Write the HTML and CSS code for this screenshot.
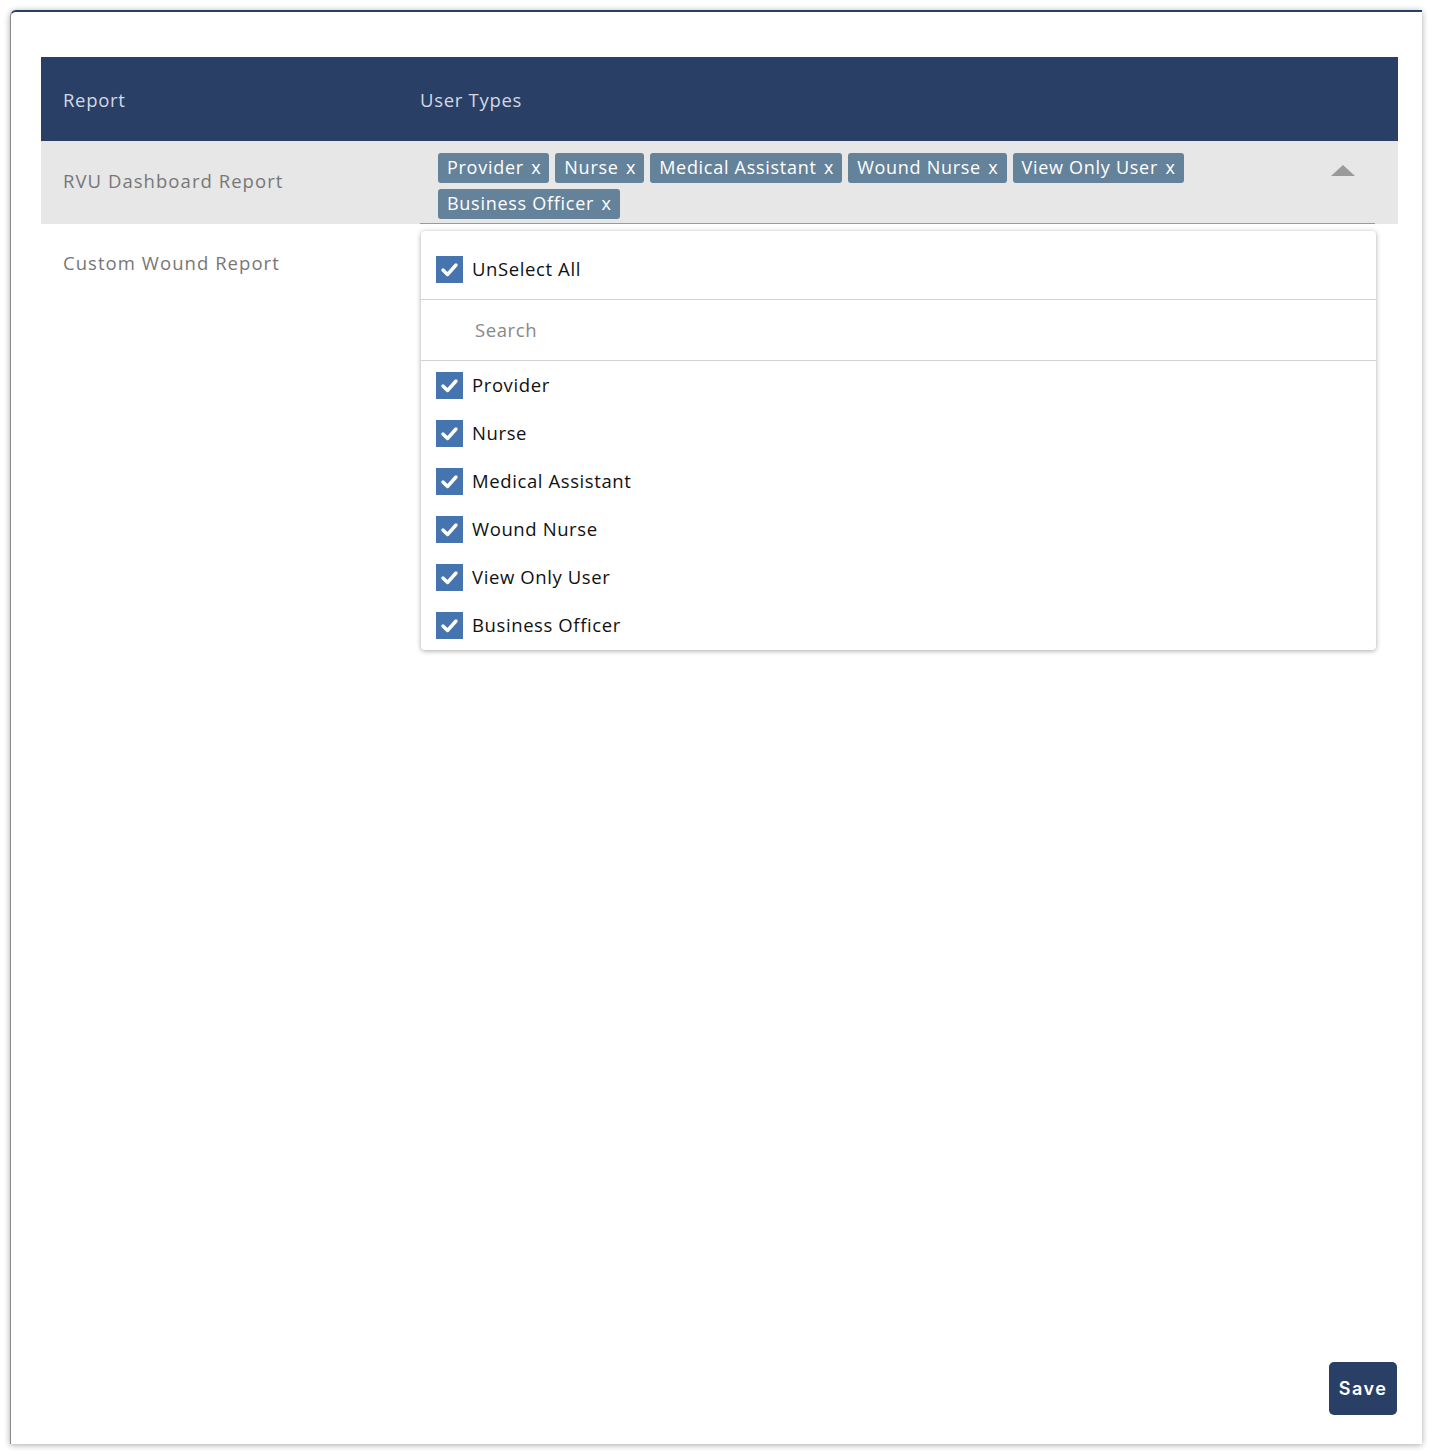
FILE: index.html
```html
<!DOCTYPE html>
<html lang="en">
<head>
    <meta charset="UTF-8">
    <meta name="viewport" content="width=device-width, initial-scale=1.0">
    <title>Report User Types</title>
    <link rel="stylesheet" href="styles.css">
</head>
<body>
    <div class="frame">
        <div class="content">
            <table class="report-table">
                <thead>
                    <tr>
                        <th class="col-report">Report</th>
                        <th>User Types</th>
                    </tr>
                </thead>
                <tbody>
                    <tr class="active">
                        <td class="col-report">RVU Dashboard Report</td>
                        <td>
                            <div class="multiselect">
                                <div class="tags">
                                    <span class="tag">Provider <span class="x">x</span></span>
                                    <span class="tag">Nurse <span class="x">x</span></span>
                                    <span class="tag">Medical Assistant <span class="x">x</span></span>
                                    <span class="tag">Wound Nurse <span class="x">x</span></span>
                                    <span class="tag">View Only User <span class="x">x</span></span>
                                    <span class="tag">Business Officer <span class="x">x</span></span>
                                </div>
                                <span class="caret"></span>

                                <div class="dropdown">
                                    <label class="option select-all">
                                        <span class="check"><svg viewBox="0 0 27 27"><polyline points="7,14 11.5,18.5 20,9"/></svg></span>
                                        UnSelect All
                                    </label>
                                    <div class="search">
                                        <input type="text" placeholder="Search">
                                    </div>
                                    <ul class="options">
                                        <li class="option"><span class="check"><svg viewBox="0 0 27 27"><polyline points="7,14 11.5,18.5 20,9"/></svg></span>Provider</li>
                                        <li class="option"><span class="check"><svg viewBox="0 0 27 27"><polyline points="7,14 11.5,18.5 20,9"/></svg></span>Nurse</li>
                                        <li class="option"><span class="check"><svg viewBox="0 0 27 27"><polyline points="7,14 11.5,18.5 20,9"/></svg></span>Medical Assistant</li>
                                        <li class="option"><span class="check"><svg viewBox="0 0 27 27"><polyline points="7,14 11.5,18.5 20,9"/></svg></span>Wound Nurse</li>
                                        <li class="option"><span class="check"><svg viewBox="0 0 27 27"><polyline points="7,14 11.5,18.5 20,9"/></svg></span>View Only User</li>
                                        <li class="option"><span class="check"><svg viewBox="0 0 27 27"><polyline points="7,14 11.5,18.5 20,9"/></svg></span>Business Officer</li>
                                    </ul>
                                </div>
                            </div>
                        </td>
                    </tr>
                    <tr>
                        <td class="col-report">Custom Wound Report</td>
                        <td></td>
                    </tr>
                </tbody>
            </table>
        </div>
        <div class="footer">
            <button class="save">Save</button>
        </div>
    </div>
</body>
</html>
```

FILE: styles.css
```css
body {
    margin: 0;
    background: #fff;
    font-family: "Open Sans", "Noto Sans", sans-serif;
}
.frame {
    box-sizing: border-box;
    margin: 10px;
    width: 1412px;
    height: 1434px;
    border-top: 2px solid #2a3f66;
    border-left: 1px solid #8a8a8a;
    border-radius: 6px 0 0 0;
    box-shadow: 0 1px 6px rgba(0,0,0,0.35);
    padding: 45px 24px 29px 30px;
    display: flex;
    flex-direction: column;
}
.content {
    flex: 1;
}
.report-table {
    width: 100%;
    border-collapse: collapse;
}
.report-table th {
    background: #2a3f66;
    color: #d3d8e2;
    font-weight: 500;
    font-size: 18.5px;
    letter-spacing: 0.7px;
    text-align: left;
    height: 84px;
    padding: 0;
}
.report-table td {
    font-size: 18.5px;
    color: #777;
    padding: 0;
    vertical-align: top;
}
.col-report {
    width: 357px;
    padding-left: 22px !important;
}
.report-table td.col-report {
    padding-top: 26px;
    height: 55px;
    letter-spacing: 1.05px;
}
.active td {
    background: #e7e7e7;
}
.active td.col-report {
    padding-top: 27px;
}
.multiselect {
    position: relative;
    margin-right: 23px;
    border-bottom: 1px solid #9a9a9a;
    padding: 12px 60px 4px 18px;
}
.tags {
    display: flex;
    flex-wrap: wrap;
    gap: 6px 6px;
}
.tag {
    background: #65829b;
    color: #fff;
    border-radius: 3px;
    height: 30px;
    line-height: 29px;
    padding: 0 8px 0 9px;
    font-size: 18px;
    letter-spacing: 0.72px;
}
.tag .x {
    margin-left: 2px;
}
.caret {
    position: absolute;
    right: 20px;
    top: 24px;
    border-left: 12px solid transparent;
    border-right: 12px solid transparent;
    border-bottom: 11px solid #9a9a9a;
}
.dropdown {
    position: absolute;
    left: 1px;
    right: -1px;
    top: calc(100% + 8px);
    background: #fff;
    border-radius: 4px;
    box-shadow: 0 1px 5px rgba(0,0,0,0.35);
    color: #111;
    z-index: 2;
}
.option {
    display: flex;
    align-items: center;
    gap: 9px;
    font-size: 18.5px;
    letter-spacing: 0.6px;
    line-height: 24px;
    color: #111;
}
.check {
    width: 27px;
    height: 27px;
    background: #4674ae;
    display: inline-flex;
    flex-shrink: 0;
}
.check svg {
    width: 27px;
    height: 27px;
    fill: none;
    stroke: #fff;
    stroke-width: 3.4;
    stroke-linecap: round;
    stroke-linejoin: round;
}
.select-all {
    box-sizing: border-box;
    height: 69px;
    padding: 8px 0 0 15px;
    border-bottom: 1px solid #d3d3d3;
}
.search {
    height: 60px;
    border-bottom: 1px solid #d3d3d3;
    display: flex;
    align-items: center;
}
.search input {
    border: none;
    outline: none;
    font-family: inherit;
    font-size: 18.5px;
    letter-spacing: 0.6px;
    padding: 0 0 2px 54px;
    width: 100%;
    background: transparent;
}
.search input::placeholder {
    color: #888;
}
.options {
    list-style: none;
    margin: 0;
    padding: 0 0 1px 15px;
}
.options .option {
    height: 48px;
}
.footer {
    display: flex;
    justify-content: flex-end;
    padding-right: 1px;
}
.save {
    background: #2a3f66;
    color: #fff;
    border: none;
    border-radius: 5px;
    width: 68px;
    height: 53px;
    font-family: "Inter", sans-serif;
    font-weight: 600;
    font-size: 18px;
    letter-spacing: 1.5px;
}
```
